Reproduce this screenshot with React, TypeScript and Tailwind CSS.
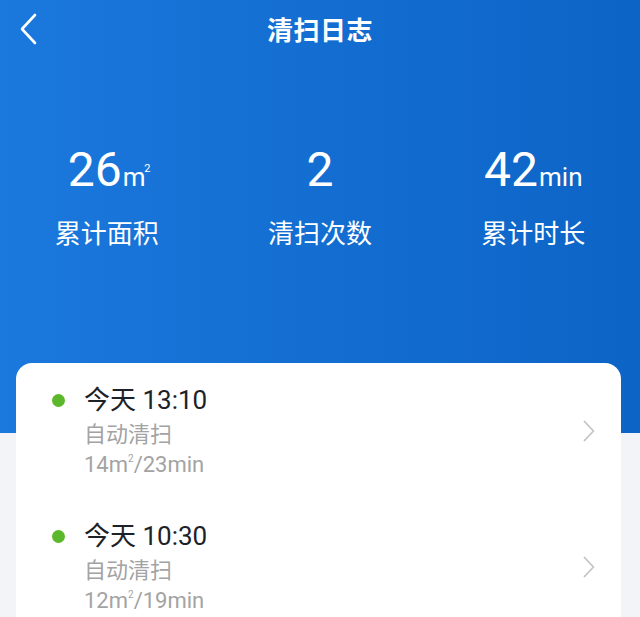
import React from "react";

const font = { fontFamily: 'Roboto, "Noto Sans CJK SC", sans-serif' };

function Stat({ value, unit, label, sq }: { value: string; unit?: string; label: string; sq?: boolean }) {
  return (
    <div className="flex flex-col items-center">
      <div className="flex items-baseline h-[50px] leading-[50px]">
        <span className="text-[48px] font-normal">{value}</span>
        {unit && (
          <span className="relative text-[26px] ml-[1px]">
            {unit}
            {sq && <span className="absolute text-[11px] top-[11px] right-[-5px] leading-none">2</span>}
          </span>
        )}
      </div>
      <div className="mt-[24px] text-[26px] leading-[30px]">{label}</div>
    </div>
  );
}

function Chevron() {
  return (
    <svg width="12" height="22" viewBox="0 0 12 22" fill="none">
      <path d="M1.5 1.5 L10.5 11 L1.5 20.5" stroke="#c4c4c4" strokeWidth="1.8" strokeLinecap="round" strokeLinejoin="round" />
    </svg>
  );
}

function Row({ time, area, mins }: { time: string; area: string; mins: string }) {
  return (
    <div className="flex items-center">
      <div className="flex-1 flex">
        <div className="w-[13px] h-[13px] rounded-full bg-[#5cb82a] mt-[9px] ml-[36px]" />
        <div className="ml-[19px] flex flex-col">
          <div className="text-[26px] leading-[30px] text-[#1d2228]">{time}</div>
          <div className="text-[22px] leading-[30px] text-[#a3a3a3] mt-[5px]">自动清扫</div>
          <div className="text-[22px] leading-[30px] text-[#a3a3a3]">
            {area}m<span className="relative top-[-10px] text-[10px]">2</span>/{mins}min
          </div>
        </div>
      </div>
      <div className="mr-[26px] mb-[8px]">
        <Chevron />
      </div>
    </div>
  );
}

export default function App() {
  return (
    <div className="w-[640px] h-[617px] overflow-hidden bg-[#f3f4f8] relative" style={font}>
      <div className="h-[433px] bg-gradient-to-r from-[#1b78dd] to-[#0c64c6] text-white">
        <div className="relative h-[62px] flex items-center justify-center">
          <svg className="absolute left-[18px] top-[13px]" width="20" height="32" viewBox="0 0 20 32" fill="none">
            <path d="M17 2 L4 16 L17 30" stroke="white" strokeWidth="2.6" strokeLinecap="round" strokeLinejoin="round" />
          </svg>
          <span className="text-[26px] font-bold tracking-[0.5px]">清扫日志</span>
        </div>
        <div className="grid grid-cols-3 mt-[83px]">
          <Stat value="26" unit="m" sq label="累计面积" />
          <Stat value="2" label="清扫次数" />
          <Stat value="42" unit="min" label="累计时长" />
        </div>
      </div>
      <div className="absolute left-[16px] right-[19px] top-[363px] bottom-0 bg-white rounded-t-[16px] pt-[22px]">
        <Row time="今天 13:10" area="14" mins="23" />
        <div className="h-[37px]" />
        <Row time="今天 10:30" area="12" mins="19" />
      </div>
    </div>
  );
}
